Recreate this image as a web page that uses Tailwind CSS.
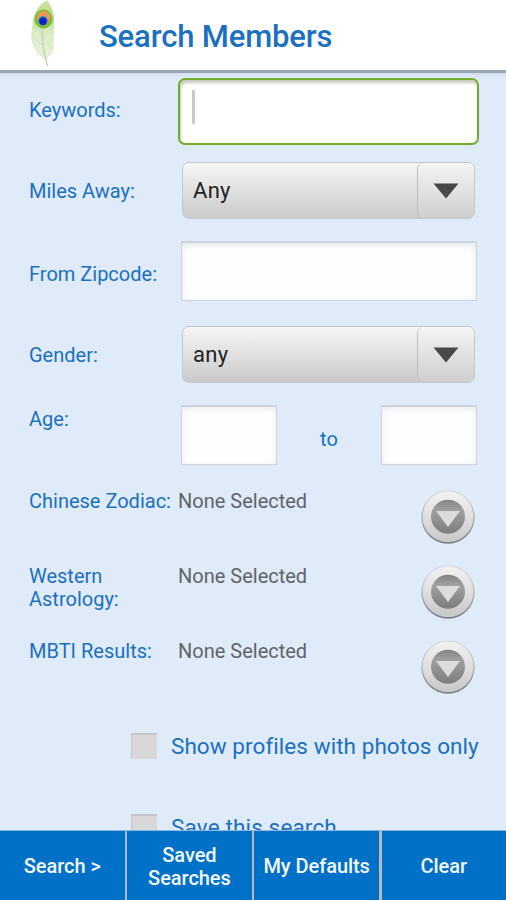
<!DOCTYPE html>
<html lang="en">
<head>
<meta charset="utf-8">
<title>Search Members</title>
<script src="https://cdn.jsdelivr.net/npm/@tailwindcss/browser@4"></script>
</head>
<body class="bg-[#dfebf9]">
<svg width="0" height="0" class="absolute" aria-hidden="true">
  <defs>
    <linearGradient id="rim" x1="0" y1="0" x2="0" y2="1"><stop offset="0" stop-color="#f2f2f2"/><stop offset=".55" stop-color="#dcdddc"/><stop offset="1" stop-color="#c6c8c7"/></linearGradient>
    <linearGradient id="edge" x1="0" y1="0" x2="0" y2="1"><stop offset="0" stop-color="#cfd2d4"/><stop offset=".5" stop-color="#a9acad"/><stop offset="1" stop-color="#777b7c"/></linearGradient>
    <linearGradient id="disc" x1="0" y1="0" x2="0" y2="1"><stop offset="0" stop-color="#848484"/><stop offset=".3" stop-color="#a0a0a0"/><stop offset="1" stop-color="#7c7c7c"/></linearGradient>
    <symbol id="drop" viewBox="0 0 54 54">
      <circle cx="27" cy="27.2" r="26.6" fill="url(#edge)"/>
      <circle cx="27" cy="26.8" r="25.5" fill="url(#rim)"/>
      <circle cx="27" cy="26.7" r="17" fill="url(#disc)"/>
      <path d="M15 21H39L27 37Z" fill="#dcdcdc"/>
    </symbol>
  </defs>
</svg>
<div class="flex h-[900px] w-[506px] flex-col overflow-hidden bg-[#dfebf9] font-['Roboto',sans-serif] text-[20px] leading-[23px] text-[#1b70c0]">
  <header class="flex h-[73px] shrink-0 items-start border-b-[3px] border-[#98a5b2] bg-white pl-[29px]">
    <svg class="h-[68px] w-[28px] shrink-0" viewBox="0 0 28 68">
      <defs>
        <linearGradient id="vane" x1="0" y1="0" x2="0" y2="1"><stop offset="0" stop-color="#cfe6a4"/><stop offset=".3" stop-color="#b5d880"/><stop offset=".48" stop-color="#d5e9bd"/><stop offset="1" stop-color="#e6f1da"/></linearGradient>
      </defs>
      <path d="M18 0C22 5 25 12 25 20C25 29 25 36 24.500 44C25 51 23 55 20 56L17.500 60C12 57 7 54 6 49C3 43 1.500 38 2.500 32C3 27 4 24 4.500 19C6 11 11 4 18 0Z" fill="url(#vane)"/>
      <path d="M5 35L13 43M3 30L13 38M7 47L14 51M24 34L15 42M24 42L16 49M5 41L13 47M22 50L17 54" stroke="#f1f8e8" stroke-width=".8" fill="none"/>
      <path d="M13 29C13 44 15 55 18.500 66" fill="none" stroke="#c3ceb2" stroke-width="1.300"/>
      <ellipse cx="14.500" cy="19" rx="9" ry="9.500" fill="#82bb38"/>
      <ellipse cx="14.800" cy="17.500" rx="6.600" ry="6.500" fill="#e89a58"/>
      <circle cx="14" cy="20.800" r="4.700" fill="#3a83b0"/>
      <circle cx="14" cy="21.300" r="3.700" fill="#0a22c8"/>
    </svg>
    <h1 class="ml-[42px] mt-[17px] text-[31px] font-medium leading-[40px] tracking-[-0.15px] whitespace-nowrap">Search Members</h1>
  </header>

  <main class="min-h-0 flex-1 overflow-hidden bg-linear-to-b from-[#d2dfee] from-0% to-[#dfebf9] to-[6px] pl-[29px]">
    <div class="flex h-[84px] pt-[5px]">
      <label class="mt-[21px] w-[149px] shrink-0">Keywords:</label>
      <div class="h-[67px] w-[301px] rounded-[7px] border-[2.5px] border-[#73ab2b] bg-white pt-[10px] pl-[12px] shadow-[inset_1px_3px_3px_#c4c9be]"><div class="h-[34px] w-[3px] bg-[#c9c9c9]"></div></div>
    </div>
    <div class="flex h-[78px] pt-[5px]">
      <label class="mt-[18px] w-[153px] shrink-0">Miles Away:</label>
      <div class="flex h-[57px] w-[293px] rounded-[7px] border border-[#c4c8cc] bg-linear-to-b from-[#f6f6f6] to-[#cacaca] text-[22px] tracking-[0.3px] text-[#222]">
        <span class="flex flex-1 items-center pl-[10px]">Any</span>
        <span class="flex w-[57px] items-center justify-center rounded-[6px] border-l border-[#bcbcbc] bg-linear-to-b from-[#f5f5f5] to-[#cecece]"><svg class="h-[16px] w-[26px]" viewBox="0 0 26 16"><path d="M.5 .5H25.500L13 15.500Z" fill="#484848"/></svg></span>
      </div>
    </div>
    <div class="flex h-[85px] pt-[6px]">
      <label class="mt-[22px] w-[152px] shrink-0">From Zipcode:</label>
      <div class="h-[60px] w-[296px] border border-t-2 border-[#cbd5df] bg-[#fdfefe] shadow-[inset_0_2px_7px_#e4e7e9]"></div>
    </div>
    <div class="flex h-[80px] pt-[6px]">
      <label class="mt-[18px] w-[153px] shrink-0">Gender:</label>
      <div class="flex h-[57px] w-[293px] rounded-[7px] border border-[#c4c8cc] bg-linear-to-b from-[#f6f6f6] to-[#cacaca] text-[22px] tracking-[0.3px] text-[#222]">
        <span class="flex flex-1 items-center pl-[10px]">any</span>
        <span class="flex w-[57px] items-center justify-center rounded-[6px] border-l border-[#bcbcbc] bg-linear-to-b from-[#f5f5f5] to-[#cecece]"><svg class="h-[16px] w-[26px]" viewBox="0 0 26 16"><path d="M.5 .5H25.500L13 15.500Z" fill="#484848"/></svg></span>
      </div>
    </div>
    <div class="flex h-[85px] pt-[5px]">
      <label class="mt-[3px] w-[152px] shrink-0">Age:</label>
      <div class="h-[60px] w-[96px] border border-t-2 border-[#cfd4dc] bg-[#fdfefe] shadow-[inset_0_2px_6px_#e8ebee]"></div>
      <span class="mt-[23px] w-[104px] text-center">to</span>
      <div class="h-[60px] w-[96px] border border-t-2 border-[#cfd4dc] bg-[#fdfefe] shadow-[inset_0_2px_6px_#e8ebee]"></div>
    </div>
    <div class="flex h-[75px] pt-[5px]">
      <label class="w-[149px] shrink-0 whitespace-nowrap">Chinese Zodiac:</label>
      <span class="w-[243px] text-[#606468]">None Selected</span>
      <svg class="size-[54px]"><use href="#drop"/></svg>
    </div>
    <div class="flex h-[75px] pt-[5px]">
      <label class="w-[149px] shrink-0">Western<br>Astrology:</label>
      <span class="w-[243px] text-[#606468]">None Selected</span>
      <svg class="size-[54px]"><use href="#drop"/></svg>
    </div>
    <div class="flex h-[75px] pt-[5px]">
      <label class="w-[149px] shrink-0">MBTI Results:</label>
      <span class="w-[243px] text-[#606468]">None Selected</span>
      <svg class="size-[54px]"><use href="#drop"/></svg>
    </div>
    <div class="flex h-[81px] items-start gap-[14px] pt-[23px] pl-[102px] text-[22.5px] leading-[26px] tracking-[0.06px] whitespace-nowrap">
      <span class="size-[26px] border-t-2 border-l border-[#c5c8cb] bg-[#d8d8d8]"></span><span>Show profiles with photos only</span>
    </div>
    <div class="flex h-[81px] items-start gap-[14px] pt-[23px] pl-[102px] text-[22.5px] leading-[26px] tracking-[0.15px] whitespace-nowrap">
      <span class="size-[26px] border-t-2 border-l border-[#c5c8cb] bg-[#d8d8d8]"></span><span>Save this search</span>
    </div>
  </main>

  <nav class="grid h-[70px] shrink-0 grid-cols-[124.500px_124.500px_124.500px_124.500px] gap-[2.700px] border-t border-[#8eb5dc] bg-[#b5b9c6] text-center text-[20px] font-medium tracking-[-0.05px] text-[#f2f8ff]">
    <button class="bg-[#0071c6] pt-[2px]">Search &gt;</button>
    <button class="bg-[#0071c6] pt-[2px]">Saved<br>Searches</button>
    <button class="bg-[#0071c6] pt-[2px] whitespace-nowrap">My Defaults</button>
    <button class="bg-[#0071c6] pt-[2px]">Clear</button>
  </nav>
</div>
</body>
</html>
